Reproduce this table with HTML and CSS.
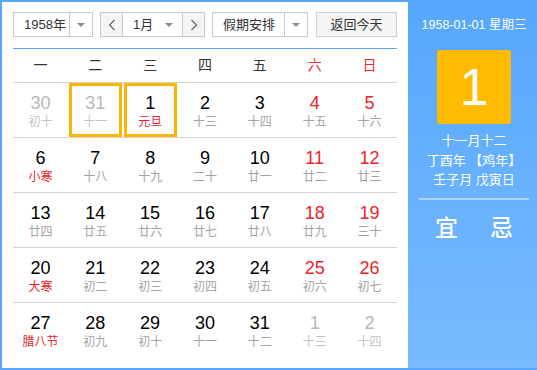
FILE: index.html
```html
<!DOCTYPE html>
<html lang="zh">
<head>
<meta charset="utf-8">
<title>万年历</title>
<link rel="stylesheet" href="styles.css">
</head>
<body>
<div class="cal">
  <div class="main">
    <div class="toolbar">
      <div class="sel sel-year">
        <span class="sel-text">1958年</span>
        <span class="sel-arrow"><i class="tri"></i></span>
      </div>
      <div class="sel sel-month">
        <span class="nav"><svg width="8" height="12" viewBox="0 0 8 12"><polyline points="6.5,1 1.5,6 6.5,11" fill="none" stroke="#666" stroke-width="1.2"/></svg></span>
        <span class="month-mid"><span class="sel-text">1月</span><i class="tri"></i></span>
        <span class="nav"><svg width="8" height="12" viewBox="0 0 8 12"><polyline points="1.5,1 6.5,6 1.5,11" fill="none" stroke="#666" stroke-width="1.2"/></svg></span>
      </div>
      <div class="sel sel-holiday">
        <span class="sel-text">假期安排</span>
        <span class="sel-arrow"><i class="tri"></i></span>
      </div>
      <div class="btn-today">返回今天</div>
    </div>

    <div class="grid">
      <div class="head">
        <span>一</span><span>二</span><span>三</span><span>四</span><span>五</span><span class="we">六</span><span class="we">日</span>
      </div>
      <div class="row">
        <div class="cell other"><b>30</b><small>初十</small></div>
        <div class="cell other sel-box"><b>31</b><small>十一</small></div>
        <div class="cell sel-box"><b>1</b><small class="fest">元旦</small></div>
        <div class="cell"><b>2</b><small>十三</small></div>
        <div class="cell"><b>3</b><small>十四</small></div>
        <div class="cell we"><b>4</b><small>十五</small></div>
        <div class="cell we"><b>5</b><small>十六</small></div>
      </div>
      <div class="row">
        <div class="cell"><b>6</b><small class="fest">小寒</small></div>
        <div class="cell"><b>7</b><small>十八</small></div>
        <div class="cell"><b>8</b><small>十九</small></div>
        <div class="cell"><b>9</b><small>二十</small></div>
        <div class="cell"><b>10</b><small>廿一</small></div>
        <div class="cell we"><b>11</b><small>廿二</small></div>
        <div class="cell we"><b>12</b><small>廿三</small></div>
      </div>
      <div class="row">
        <div class="cell"><b>13</b><small>廿四</small></div>
        <div class="cell"><b>14</b><small>廿五</small></div>
        <div class="cell"><b>15</b><small>廿六</small></div>
        <div class="cell"><b>16</b><small>廿七</small></div>
        <div class="cell"><b>17</b><small>廿八</small></div>
        <div class="cell we"><b>18</b><small>廿九</small></div>
        <div class="cell we"><b>19</b><small>三十</small></div>
      </div>
      <div class="row">
        <div class="cell"><b>20</b><small class="fest">大寒</small></div>
        <div class="cell"><b>21</b><small>初二</small></div>
        <div class="cell"><b>22</b><small>初三</small></div>
        <div class="cell"><b>23</b><small>初四</small></div>
        <div class="cell"><b>24</b><small>初五</small></div>
        <div class="cell we"><b>25</b><small>初六</small></div>
        <div class="cell we"><b>26</b><small>初七</small></div>
      </div>
      <div class="row">
        <div class="cell"><b>27</b><small class="fest">腊八节</small></div>
        <div class="cell"><b>28</b><small>初九</small></div>
        <div class="cell"><b>29</b><small>初十</small></div>
        <div class="cell"><b>30</b><small>十一</small></div>
        <div class="cell"><b>31</b><small>十二</small></div>
        <div class="cell other"><b>1</b><small>十三</small></div>
        <div class="cell other"><b>2</b><small>十四</small></div>
      </div>
    </div>
  </div>

  <div class="panel">
    <div class="p-date">1958-01-01 星期三</div>
    <div class="p-day">1</div>
    <div class="p-lunar">
      <div>十一月十二</div>
      <div>丁酉年 【鸡年】</div>
      <div>壬子月 戊寅日</div>
    </div>
    <div class="p-line"></div>
    <div class="p-yiji"><span>宜</span><span>忌</span></div>
  </div>
</div>
</body>
</html>
```

FILE: styles.css
```css
* { box-sizing: border-box; margin: 0; padding: 0; }
html, body { width: 537px; height: 370px; overflow: hidden; }
body {
  font-family: "Liberation Sans", "Noto Sans CJK SC", sans-serif;
  color: #333;
  background: #fff;
}
.cal {
  display: flex;
  width: 537px;
  height: 370px;
  border: 2px solid #56a7fd;
  border-right: none;
}
.main {
  width: 406px;
  background: #fff;
  padding: 10px 11px 0 11px;
}
.toolbar {
  display: flex;
  height: 25px;
  font-size: 13px;
  color: #333;
}
.sel {
  display: flex;
  border: 1px solid #c9c9c9;
  background: #fff;
  height: 25px;
}
.sel-text { line-height: 23px; }
.sel-year { width: 80px; }
.sel-year .sel-text { width: 55px; padding-left: 10px; }
.sel-arrow {
  flex: 1;
  border-left: 1px solid #c9c9c9;
  display: flex;
  align-items: center;
  justify-content: center;
}
.tri {
  display: block;
  width: 0;
  height: 0;
  border-left: 4px solid transparent;
  border-right: 4px solid transparent;
  border-top: 4px solid #8a8a8a;
}
.sel-month { width: 105px; margin-left: 7px; }
.nav {
  width: 22px;
  background: #f5f5f5;
  display: flex;
  align-items: center;
  justify-content: center;
}
.nav:first-child { border-right: 1px solid #c9c9c9; }
.nav:last-child { border-left: 1px solid #c9c9c9; }
.month-mid {
  flex: 1;
  display: flex;
  align-items: center;
  padding-left: 10px;
  padding-right: 9px;
  justify-content: space-between;
}
.sel-holiday { width: 96px; margin-left: 7px; }
.sel-holiday .sel-text { width: 71px; padding-left: 10px; }
.btn-today {
  width: 81px;
  margin-left: 8px;
  border: 1px solid #cfcfcf;
  background: #f5f5f5;
  text-align: center;
  line-height: 23px;
  height: 25px;
}
.grid {
  margin-top: 11px;
  border-top: 1px solid #56a7fd;
  width: 384px;
}
.head {
  display: grid;
  grid-template-columns: repeat(7, 1fr);
  height: 33px;
  line-height: 33px;
  text-align: center;
  font-size: 14px;
  color: #333;
}
.head .we { color: #f0282f; }
.row {
  display: grid;
  grid-template-columns: repeat(7, 1fr);
  border-top: 1px solid #d3d3d3;
  height: 55px;
}
.cell {
  margin: 0 1px;
  border: 3px solid transparent;
  text-align: center;
  padding-top: 6px;
}
.cell b {
  display: block;
  font-weight: normal;
  font-size: 18px;
  line-height: 22px;
  color: #000;
}
.cell small {
  display: block;
  font-size: 12px;
  line-height: 16px;
  color: #a3a3a3;
}
.cell.we b { color: #e9242b; }
.cell small.fest { color: #e9242b; }
.cell.other b { color: #b9b9b9; }
.cell.other small { color: #c4c4c4; }
.cell.sel-box { border-color: #fbb700; }
.panel {
  flex: 1;
  background: linear-gradient(#56a7fd, #78bbff);
  color: #fff;
  padding: 15px 0 0 3px;
  display: flex;
  flex-direction: column;
  align-items: center;
}
.p-date {
  font-size: 12.5px;
  line-height: 16px;
  white-space: nowrap;
}
.p-day {
  margin-top: 17px;
  width: 74px;
  height: 74px;
  border-radius: 3px;
  background: #ffbb00;
  font-size: 52px;
  line-height: 74px;
  text-align: center;
}
.p-lunar {
  margin-top: 7px;
  font-size: 13px;
  line-height: 19.5px;
  text-align: center;
  white-space: nowrap;
}
.p-line {
  margin-top: 8px;
  width: 110px;
  height: 2px;
  background: rgba(255, 255, 255, 0.45);
}
.p-yiji {
  margin-top: 14px;
  display: flex;
  gap: 32px;
  font-size: 23px;
  line-height: 28px;
  font-weight: 500;
}
```
